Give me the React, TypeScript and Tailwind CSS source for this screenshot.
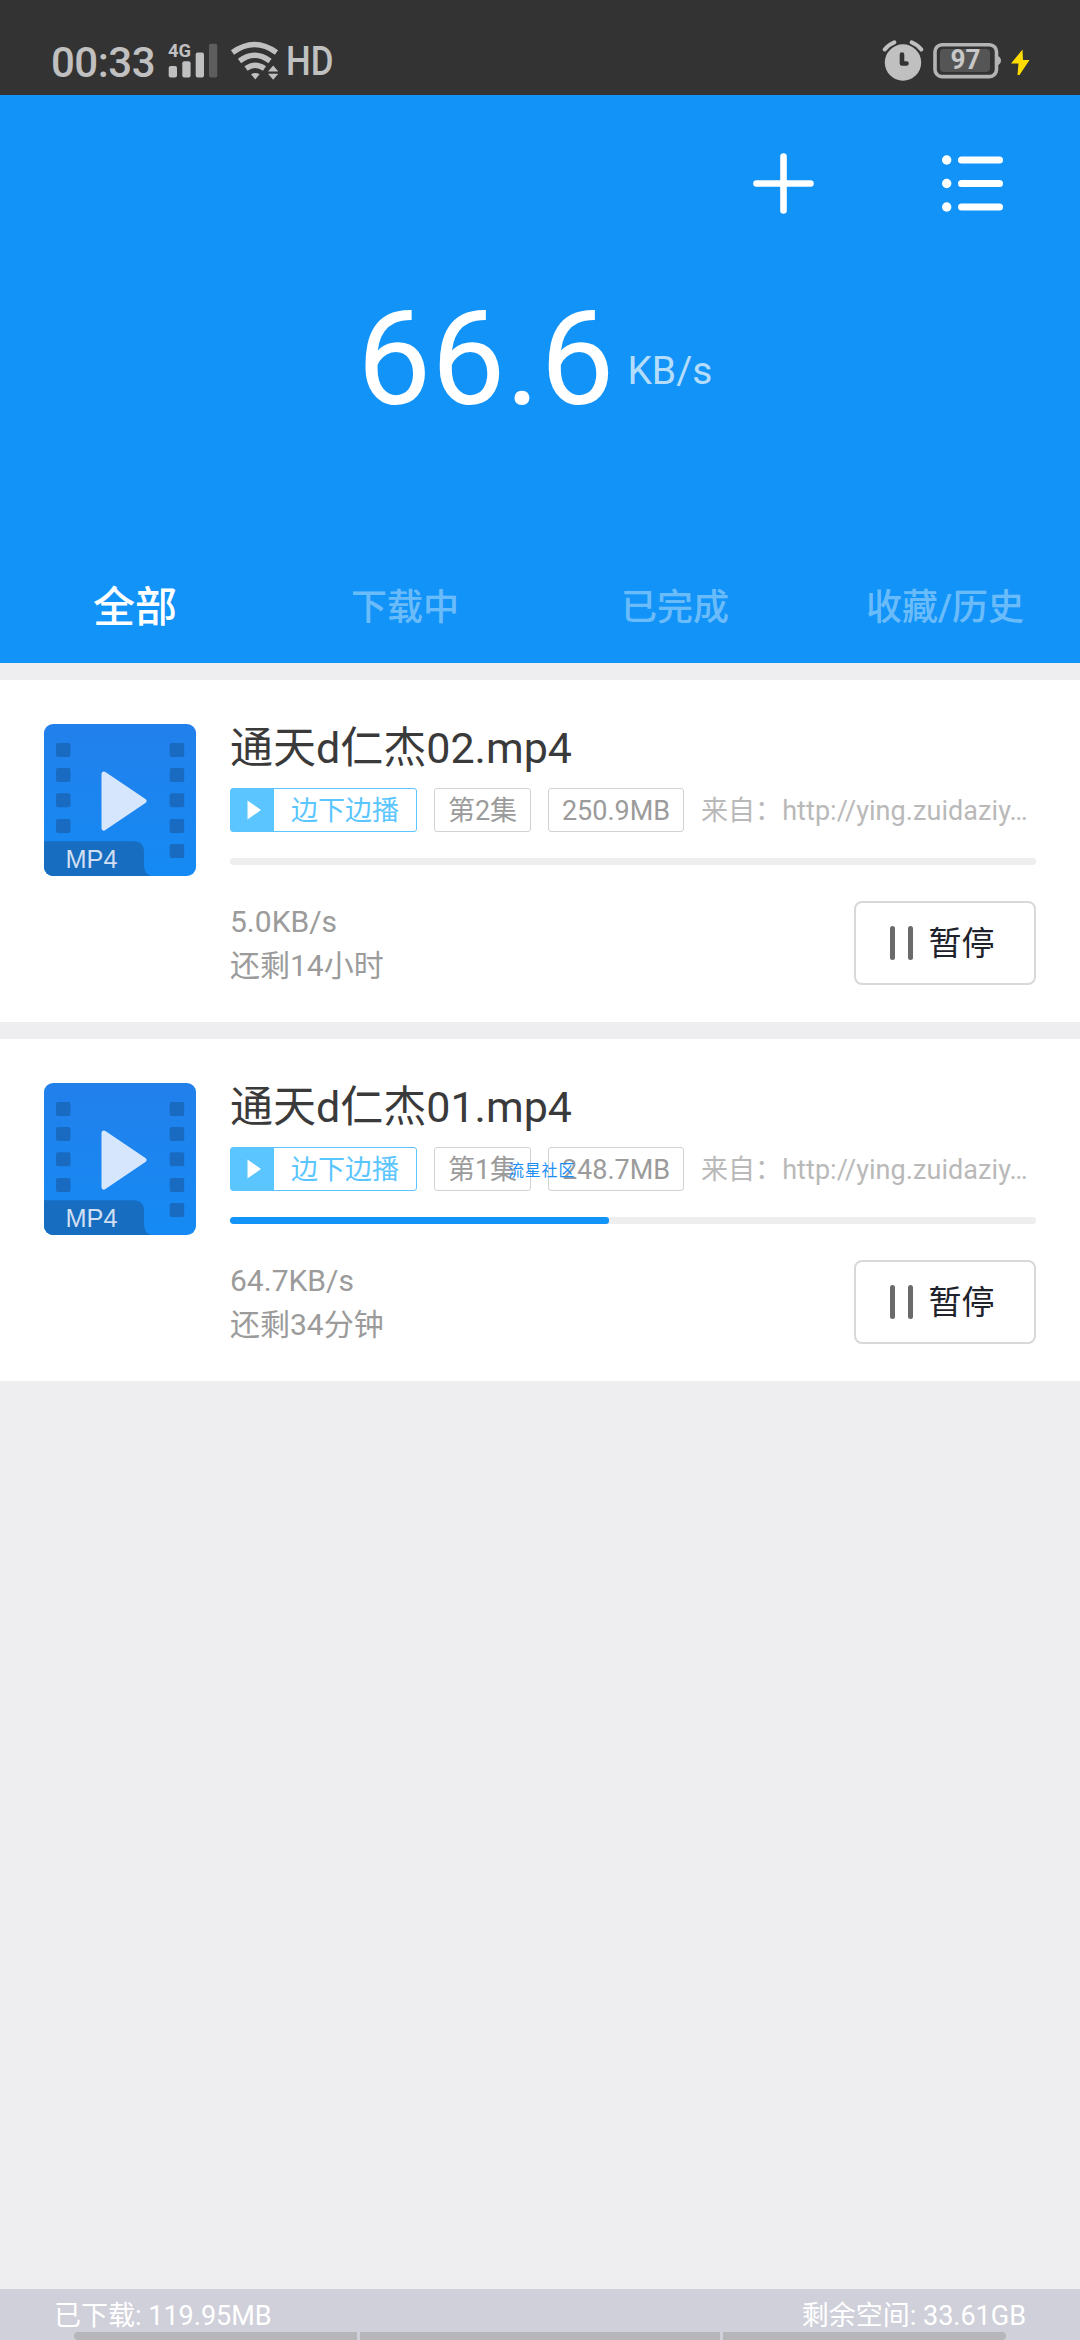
interface Task {
  name: string;
  episode: string;
  size: string;
  speed: string;
  remaining: string;
  progress: number;
}

const tasks: Task[] = [
  {
    name: '通天d仁杰02.mp4',
    episode: '第2集',
    size: '250.9MB',
    speed: '5.0KB/s',
    remaining: '还剩14小时',
    progress: 0,
  },
  {
    name: '通天d仁杰01.mp4',
    episode: '第1集',
    size: '248.7MB',
    speed: '64.7KB/s',
    remaining: '还剩34分钟',
    progress: 47,
  },
];

const tabs = ['全部', '下载中', '已完成', '收藏/历史'];

function SignalIcon() {
  return (
    <svg className="h-[38px] w-[50px]" viewBox="168 41 50 38">
      <text x="168" y="57" fontSize="18" fontWeight="700" textLength="23" lengthAdjust="spacingAndGlyphs" fill="#c0c0c0">
        4G
      </text>
      <rect x="168.700" y="66" width="8.300" height="11.500" rx="2" fill="#c0c0c0" />
      <rect x="182.300" y="61.300" width="8.300" height="16.200" rx="2" fill="#c0c0c0" />
      <rect x="195.700" y="52.500" width="8.300" height="25" rx="2" fill="#c0c0c0" />
      <rect x="209" y="43.700" width="8.300" height="33.800" rx="2" fill="#5d5d5d" />
    </svg>
  );
}

function WifiIcon() {
  return (
    <svg className="h-[40px] w-[50px]" viewBox="230 41 50 40" fill="none" stroke="#c0c0c0" strokeWidth="5.400">
      <path d="M232.500 52.500Q254.500 36.500 276.500 52.500" />
      <path d="M239.500 61Q254.500 49.500 270 61" />
      <path d="M246 68.500Q255 62 264.500 68.500" />
      <path d="M251 74.300Q255.300 71.500 259.600 74.300L255.300 79.500Z" fill="#c0c0c0" stroke="none" />
      <path d="M268 71.500L273.200 65.500L278.300 71.500ZM268 73.700L273.200 79.700L278.300 73.700Z" fill="#c0c0c0" stroke="none" />
    </svg>
  );
}

function AlarmIcon() {
  return (
    <svg className="h-[42px] w-[42px]" viewBox="882 40 42 42" fill="none" strokeLinecap="round" strokeLinejoin="round">
      <circle cx="903" cy="62.500" r="18.200" fill="#c0c0c0" />
      <path d="M884.700 49.500Q888.500 44.500 894.300 42.300" stroke="#c0c0c0" strokeWidth="4" />
      <path d="M921.300 49.500Q917.500 44.500 911.700 42.300" stroke="#c0c0c0" strokeWidth="4" />
      <path d="M902 54.500V63.500H906.500" stroke="#333" strokeWidth="4.600" />
    </svg>
  );
}

function BatteryIcon() {
  return (
    <svg className="h-[36px] w-[69px]" viewBox="933 43 69 36">
      <rect x="935" y="44.800" width="61.500" height="31.800" rx="7" fill="none" stroke="#b4b4b4" strokeWidth="3.600" />
      <path d="M997 55.500Q1001 57 1001 60.500T997 65.500Z" fill="#b4b4b4" />
      <rect x="940" y="49" width="50" height="23" rx="4" fill="#555" />
      <text x="950.500" y="69" fontSize="27" fontWeight="700" textLength="30" lengthAdjust="spacingAndGlyphs" fill="#c8c8c8">
        97
      </text>
    </svg>
  );
}

function StatusBar() {
  return (
    <div className="flex h-[95px] items-start bg-[#333] pt-[41px] pl-[51px] text-[#c0c0c0]">
      <span className="w-[117px] pt-px text-[42px] leading-[42px] font-medium tracking-[-0.500px]">00:33</span>
      <SignalIcon />
      <div className="ml-3">
        <WifiIcon />
      </div>
      <span className="ml-[6px] w-[52px] origin-left scale-x-[0.850] text-[41px] leading-[40px] font-medium">HD</span>
      <div className="-mt-px ml-auto flex pr-[49px]">
        <AlarmIcon />
        <div className="mt-[3px] ml-[9px]">
          <BatteryIcon />
        </div>
        <svg className="mt-[9px] ml-[9px] h-[27px] w-[20px]" viewBox="0 0 20 27">
          <path d="M11.500 0.500L0 14.500H7.500L6.500 26H8.500L18.500 11H12Z" fill="#ffdc00" />
        </svg>
      </div>
    </div>
  );
}

function Header() {
  return (
    <header className="flex h-[568px] flex-col bg-[#1293f7] text-white">
      <div className="flex justify-end pt-[57px] pr-[75px]">
        <svg className="h-[63px] w-[63px]" viewBox="0 0 63 63" stroke="currentColor" strokeWidth="6.600" strokeLinecap="round">
          <path d="M31.500 4.500V58.500M4.500 31.500H58.500" />
        </svg>
        <svg className="ml-[126px] h-[63px] w-[64px]" viewBox="0 0 64 63" fill="currentColor">
          <g stroke="currentColor" strokeWidth="7" strokeLinecap="round">
            <path d="M20.500 8H58.500M20.500 31.500H58.500M20.500 55H58.500" />
          </g>
          <circle cx="5.700" cy="8" r="4.700" />
          <circle cx="5.700" cy="31.500" r="4.700" />
          <circle cx="5.700" cy="55" r="4.700" />
        </svg>
      </div>
      <div className="mt-[78px] flex pl-[357px]">
        <span className="text-[132px] leading-[132px]">66.6</span>
        <span className="mt-[58px] ml-[13px] text-[39px] leading-[40px] text-white/70">KB/s</span>
      </div>
      <nav className="mt-auto mb-[19px] grid h-[72px] grid-cols-4 text-center leading-[72px]">
        {tabs.map((tab, i) => (
          <span key={tab} className={i === 0 ? 'text-[42px] font-medium' : 'text-[36px] font-medium text-white/40'}>
            {tab}
          </span>
        ))}
      </nav>
    </header>
  );
}

function VideoIcon() {
  return (
    <svg className="h-[152px] w-[152px] shrink-0 rounded-[9px]" viewBox="0 0 152 152">
      <defs>
        <linearGradient id="cover" x1="0" y1="0" x2="0" y2="1">
          <stop offset="0" stopColor="#2280eb" />
          <stop offset="1" stopColor="#158af4" />
        </linearGradient>
      </defs>
      <rect width="152" height="152" fill="url(#cover)" />
      {[19, 44, 69.300, 95, 120].map((y) => (
        <g key={y} fill="#196bc1">
          {y < 120 && <rect x="12" y={y} width="14.500" height="14" rx="2" />}
          <rect x="125.700" y={y} width="14.500" height="14" rx="2" />
        </g>
      ))}
      <path d="M0 117.300H89Q100 117.300 100 128V140Q100 152 109 152H0Z" fill="#176dc0" />
      <path d="M60 50L100 77L60 104Z" fill="#d5e6fd" stroke="#d5e6fd" strokeWidth="5" strokeLinejoin="round" />
      <text x="21.500" y="144.300" fontSize="26" fontFamily="Liberation Sans" fill="#d0dff2" textLength="52" lengthAdjust="spacingAndGlyphs">
        MP4
      </text>
    </svg>
  );
}

function TaskCard({ task }: { task: Task }) {
  return (
    <div className="flex h-[342px] gap-[34px] bg-white px-11 pt-11">
      <VideoIcon />
      <div className="min-w-0 flex-1">
        <h2 className="h-12 text-[43px] leading-[48px] text-[#3a3a3a]">{task.name}</h2>
        <div className="mt-4 flex h-11 text-[27px] leading-[44px] text-[#9b9b9b]">
          <div className="flex w-[187px] shrink-0 rounded-[3px] border border-[#5bc5ff] text-[#5bc5ff]">
            <div className="flex w-[43px] items-center bg-[#5bc5ff] pl-4">
              <svg className="h-5 w-[14px]" viewBox="0 0 14 20">
                <path d="M0.500 0.500L14 10L0.500 19.500Z" fill="white" />
              </svg>
            </div>
            <span className="flex-1 text-center">边下边播</span>
          </div>
          <span className="ml-[17px] w-[97px] shrink-0 rounded-[3px] border border-[#d2d2d2] text-center">{task.episode}</span>
          <span className="ml-[17px] w-[136px] shrink-0 rounded-[3px] border border-[#d2d2d2] text-center">{task.size}</span>
          <span className="ml-[17px] truncate leading-[46px] tracking-[0.060px] whitespace-nowrap text-[#b9b9b9]">
            来自：http://ying.zuidaziy…
          </span>
        </div>
        <div className="mt-[26px] h-[7px] overflow-hidden rounded-[3px] bg-[#eee]">
          <div className="h-full rounded-[3px] bg-[#1293f7]" style={{ width: `${task.progress}%` }} />
        </div>
        <div className="mt-[35px] flex justify-between">
          <div className="text-[30px] leading-[44px] text-[#9b9b9b]">
            <p>{task.speed}</p>
            <p>{task.remaining}</p>
          </div>
          <button className="mt-px flex h-[84px] w-[182px] items-center rounded-[8px] border-2 border-[#d8d8d8] pl-[34px] text-[33px] leading-[80px] text-[#1e222b]">
            <span className="h-[34px] w-[4.500px] rounded-full bg-[#6a6a6a]" />
            <span className="ml-[13.500px] h-[34px] w-[4.500px] rounded-full bg-[#6a6a6a]" />
            <span className="ml-4 pt-[2px]">暂停</span>
          </button>
        </div>
      </div>
    </div>
  );
}

function Footer() {
  return (
    <footer className="flex h-[51px] flex-col bg-[#d0d0da] text-[27px] text-white">
      <div className="flex h-[43px] justify-between pt-[6px] pr-[54px] pl-[54px] leading-[42px]">
        <span>已下载: 119.95MB</span>
        <span>剩余空间: 33.61GB</span>
      </div>
      {/* system gesture bar */}
      <div className="mx-[74px] flex h-2 gap-[3px]">
        <div className="flex-1 rounded-l-[4px] bg-[#b6b5ba]" />
        <div className="w-[360px] bg-[#b6b5ba]" />
        <div className="flex-1 rounded-r-[4px] bg-[#b6b5ba]" />
      </div>
    </footer>
  );
}

export default function App() {
  return (
    <div className="relative flex h-[2340px] w-[1080px] flex-col overflow-hidden bg-[#eeeef0] font-['Roboto','Noto_Sans_CJK_SC',sans-serif]">
      <StatusBar />
      <Header />
      <main className="flex flex-1 flex-col gap-[17px] pt-[17px]">
        {tasks.map((task) => (
          <TaskCard key={task.name} task={task} />
        ))}
      </main>
      <Footer />
      <span className="absolute top-[1161px] left-[508px] text-[16px] leading-[20px] tracking-[0.800px] text-[#1b8ff5]">流星社区</span>
    </div>
  );
}
